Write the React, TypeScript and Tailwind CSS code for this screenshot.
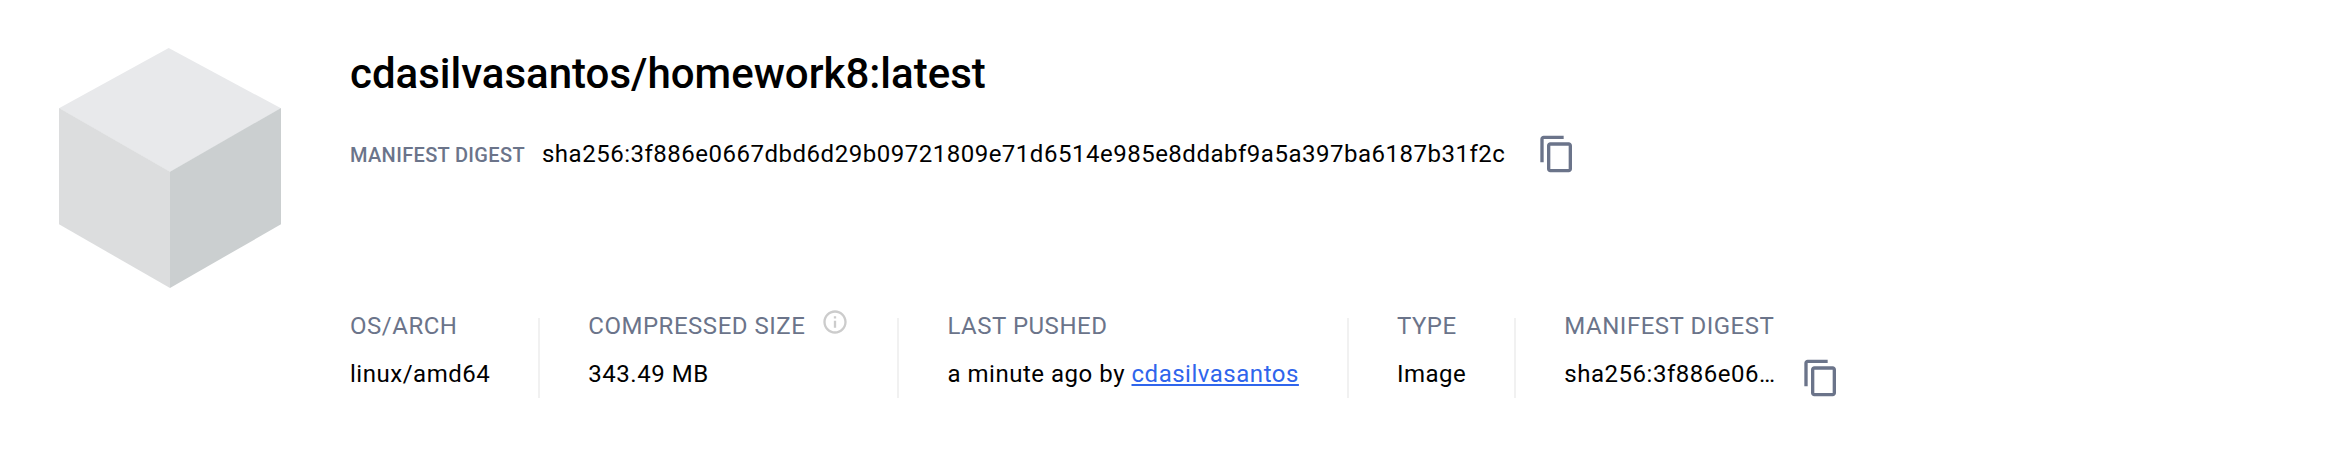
import type { ReactNode } from 'react';
import { MdContentCopy, MdInfoOutline } from 'react-icons/md';

const DIGEST = 'sha256:3f886e0667dbd6d29b09721809e71d6514e985e8ddabf9a5a397ba6187b31f2c';

function Cube() {
  return (
    <svg width="222" height="240" viewBox="0 0 222 240" className="shrink-0" aria-hidden="true">
      <path d="M109.7 0 222 60.3 111 124 0 60.3Z" fill="#e8e9eb" />
      <path d="M0 60 111 123.7V240L0 176.3Z" fill="#dcddde" />
      <path d="M222 60 111 123.7V240L222 176.3Z" fill="#cbcfd0" />
    </svg>
  );
}

function CopyButton() {
  return (
    <button type="button" aria-label="Copy digest" className="block size-10 shrink-0 text-[#6b748a]">
      <MdContentCopy className="size-10" />
    </button>
  );
}

function Field({ label, info, children }: { label: string; info?: boolean; children: ReactNode }) {
  return (
    <div className="shrink-0">
      <div className="flex h-9 items-start gap-4">
        <span className="leading-9 text-[#6b748a]">{label}</span>
        {info && <MdInfoOutline className="size-7 text-[#cccccc]" />}
      </div>
      <div className="mt-3.5 leading-8">{children}</div>
    </div>
  );
}

function Divider() {
  return <div className="mx-12 mt-2.5 h-20 w-0.5 shrink-0 bg-[#f1f1f1]" />;
}

export default function App() {
  return (
    <main className="flex h-[462px] items-start gap-[69px] bg-white pl-[59px] pt-12 font-['Roboto',sans-serif] text-[24px] tracking-[0.52px] text-black">
      <Cube />
      <div className="whitespace-nowrap">
        <h1 className="text-[42px] font-medium leading-[52px] tracking-normal">
          cdasilvasantos/homework8:latest
        </h1>
        <div className="mt-[34px] flex h-10 items-center gap-8">
          <div className="flex items-baseline gap-[17px]">
            <span className="text-[20px] font-medium tracking-[0.34px] text-[#6b748a]">MANIFEST DIGEST</span>
            <span className="leading-10 tracking-[0.51px]">{DIGEST}</span>
          </div>
          <CopyButton />
        </div>
        <div className="mt-[134px] flex items-start">
          <Field label="OS/ARCH">linux/amd64</Field>
          <Divider />
          <Field label="COMPRESSED SIZE" info>343.49 MB</Field>
          <Divider />
          <Field label="LAST PUSHED">
            a minute ago by{' '}
            <a href="#" className="text-[#2f65ec] underline decoration-2 underline-offset-2">cdasilvasantos</a>
          </Field>
          <Divider />
          <Field label="TYPE">Image</Field>
          <Divider />
          <Field label="MANIFEST DIGEST">
            <div className="flex items-start gap-[25px]">
              <span>sha256:3f886e06…</span>
              <CopyButton />
            </div>
          </Field>
        </div>
      </div>
    </main>
  );
}
